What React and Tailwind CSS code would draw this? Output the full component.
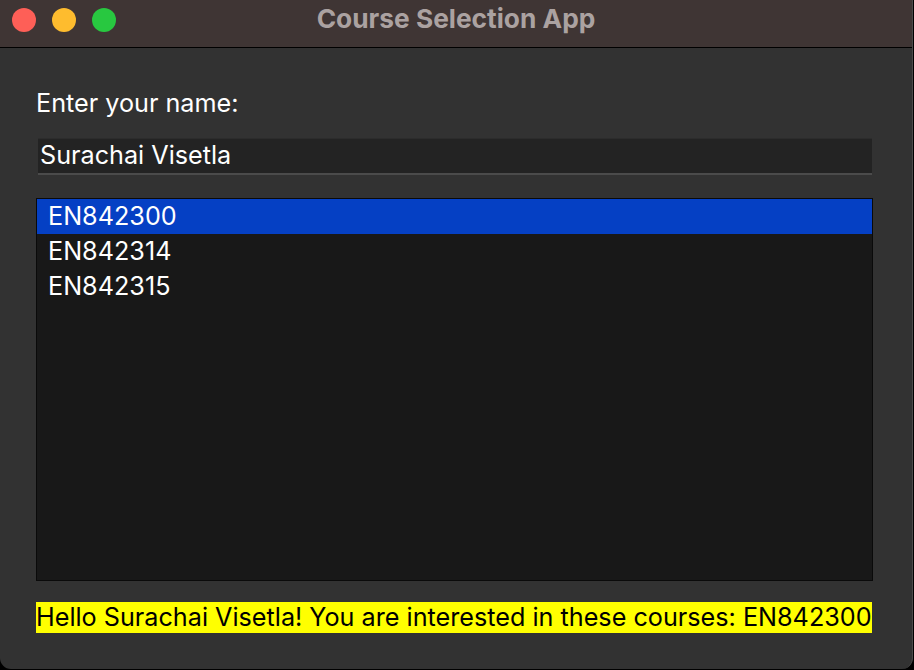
import React, { useState } from 'react';

const courses = ['EN842300', 'EN842314', 'EN842315'];

export default function App() {
    const [name, setName] = useState('Surachai Visetla');
    const [selected, setSelected] = useState(['EN842300']);

    const toggle = (c) => {
        setSelected((prev) => (prev.includes(c) ? prev.filter((x) => x !== c) : [...prev, c]));
    };

    return (
        <div className="w-[914px] h-[670px] bg-black overflow-hidden" style={{ fontFamily: 'Inter, "Liberation Sans", sans-serif' }}>
            <div className="w-[913px] h-[669px] flex flex-col bg-[#323232] rounded-b-[11px] border-r border-[#4a4a4a] overflow-hidden">
                {/* title bar */}
                <div className="relative h-[48px] shrink-0 bg-[#3f3534] border-b border-black flex items-center justify-center">
                    <div className="absolute left-[12px] top-[8px] flex gap-[16px]">
                        <span className="w-[24px] h-[24px] rounded-full bg-[#fe5f57]" />
                        <span className="w-[24px] h-[24px] rounded-full bg-[#febc2e]" />
                        <span className="w-[24px] h-[24px] rounded-full bg-[#28c840]" />
                    </div>
                    <span className="text-[26.3px] font-bold text-[#aba2a1] leading-none -mt-[9px]">Course Selection App</span>
                </div>

                {/* body */}
                <div className="flex flex-col px-[36px] pt-[40px]">
                    <label className="text-[25.2px] text-white leading-[30px]">Enter your name:</label>
                    <input
                        value={name}
                        onChange={(e) => setName(e.target.value)}
                        className="mt-[20px] ml-[2px] w-[834px] h-[37px] bg-[#232323] border-t border-[#2c2c2c] border-b-2 border-b-[#4b4b4b] px-[2px] text-[25.2px] text-white outline-none"
                    />
                    <div className="mt-[23px] w-[837px] h-[383px] bg-[#181818] border border-[#0a0a0a] flex flex-col">
                        {courses.map((c) => (
                            <div
                                key={c}
                                onClick={() => toggle(c)}
                                className={`h-[35px] flex items-center px-[11px] text-[25.2px] text-white cursor-default ${selected.includes(c) ? 'bg-[#0540c4]' : ''}`}
                            >
                                {c}
                            </div>
                        ))}
                    </div>
                    <div className="mt-[21px] self-start bg-[#ffff00] h-[31px] flex items-center text-[25.2px] text-black leading-none whitespace-nowrap">
                        Hello {name}! You are interested in these courses: {selected.join(', ')}
                    </div>
                </div>
            </div>
        </div>
    );
}
